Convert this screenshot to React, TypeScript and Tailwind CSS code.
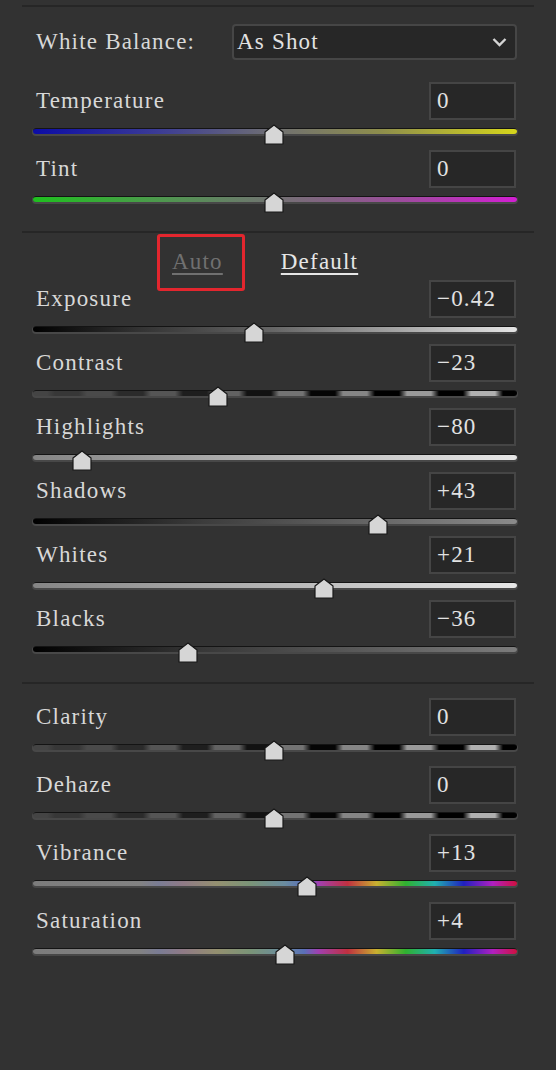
import type { CSSProperties } from "react";

type Row = {
  label: string;
  value: string;
  pos: number; // x of the thumb apex in the panel
  track?: string;
  bands?: boolean;
};

const TRACK_LEFT = 32;
const TRACK_WIDTH = 484;

// contrast / clarity / dehaze tracks: alternating bands that get harder to the right
function bandGradient() {
  const grey = (x: number, light: boolean) => {
    const t = Math.min(Math.max(x / TRACK_WIDTH, 0), 1);
    const v = light ? 68 + 120 * Math.pow(t, 1.5) : Math.max(0, 62 - 95 * t);
    const c = Math.round(v);
    return `rgb(${c},${c},${c})`;
  };
  const stops: string[] = [];
  for (let k = 0; k < 8; k++) {
    const s = -14 + 64 * k;
    const hi = grey(s + 16, true);
    const lo = grey(s + 48, false);
    stops.push(`${hi} ${s + 4}px`, `${hi} ${s + 28}px`, `${lo} ${s + 36}px`, `${lo} ${s + 60}px`);
  }
  return `linear-gradient(to right, ${stops.join(", ")})`;
}

const BANDS = bandGradient();

const whiteBalance: Row[] = [
  {
    label: "Temperature",
    value: "0",
    pos: 274,
    track: "bg-[linear-gradient(to_right,#0c0ca6_0%,#3a3a96_25%,#707072_50%,#8e8e4c_72%,#d6d61c_100%)]",
  },
  {
    label: "Tint",
    value: "0",
    pos: 274,
    track: "bg-[linear-gradient(to_right,#1fc01f_0%,#4c9a4c_25%,#727272_50%,#9a4e9a_75%,#d21fd2_100%)]",
  },
];

const basic: Row[] = [
  {
    label: "Exposure",
    value: "−0.42",
    pos: 254,
    track: "bg-[linear-gradient(to_right,#000000_0%,#333333_22%,#676767_50%,#a6a6a6_76%,#e4e4e4_100%)]",
  },
  { label: "Contrast", value: "−23", pos: 218, bands: true },
  {
    label: "Highlights",
    value: "−80",
    pos: 82,
    track: "bg-[linear-gradient(to_right,#858585,#e6e6e6)]",
  },
  {
    label: "Shadows",
    value: "+43",
    pos: 378,
    track: "bg-[linear-gradient(to_right,#000000_0%,#3c3c3c_35%,#8a8a8a_100%)]",
  },
  {
    label: "Whites",
    value: "+21",
    pos: 324,
    track: "bg-[linear-gradient(to_right,#858585,#e6e6e6)]",
  },
  {
    label: "Blacks",
    value: "−36",
    pos: 188,
    track: "bg-[linear-gradient(to_right,#000000_0%,#383838_35%,#7c7c7c_100%)]",
  },
];

const SPECTRUM =
  "bg-[linear-gradient(to_right,#7c7c7c_0%,#828282_22%,#7a7c94_26%,#8f7a86_31%,#949070_38%,#7a9478_45%,#6a8ca0_52%,#5a70b8_56%,#a040b0_59%,#c03040_65%,#c8b030_71%,#30b030_77%,#20b0b0_83%,#2020c0_89%,#b020c0_95%,#d01040_100%)]";

const presence: Row[] = [
  { label: "Clarity", value: "0", pos: 274, bands: true },
  { label: "Dehaze", value: "0", pos: 274, bands: true },
  { label: "Vibrance", value: "+13", pos: 307, track: SPECTRUM },
  { label: "Saturation", value: "+4", pos: 285, track: SPECTRUM },
];

function Divider({ className = "" }: { className?: string }) {
  return <div className={`mx-[22px] h-[2px] bg-[#262626] ${className}`} />;
}

function ValueBox({ value }: { value: string }) {
  return (
    <div className="mr-[2px] flex h-[38px] w-[87px] items-center border-2 border-[#454545] bg-[#272727] pl-[6px] text-[#e2e2e2]">
      {value}
    </div>
  );
}

function Slider({ row }: { row: Row }) {
  const fill: CSSProperties | undefined = row.bands ? { backgroundImage: BANDS } : undefined;
  return (
    <div className="relative h-[8px]">
      <div className="h-[8px] rounded-full bg-[#484848] px-[1px] pb-[2px]">
        <div className={`h-[6px] rounded-full border-t border-[#141414] ${row.track ?? ""}`} style={fill} />
      </div>
      <svg
        className="absolute top-[-4px]"
        style={{ left: row.pos - TRACK_LEFT - 10 }}
        width="20"
        height="21"
        viewBox="0 0 20 21"
      >
        <path
          d="M1 8 L10 1 L19 8 V20 H1 Z"
          fill="#d6d6d6"
          stroke="#181818"
          strokeWidth="1.2"
          strokeLinejoin="round"
        />
      </svg>
    </div>
  );
}

function SliderRow({ row, tight }: { row: Row; tight?: boolean }) {
  return (
    <div className={tight ? "pb-[10px]" : "pb-[14px]"}>
      <div className="flex h-[38px] items-center justify-between">
        <span className="pl-[4px]">{row.label}</span>
        <ValueBox value={row.value} />
      </div>
      <div className="mt-[8px]">
        <Slider row={row} />
      </div>
    </div>
  );
}

export default function App() {
  return (
    <div className="h-[1070px] w-[556px] overflow-hidden bg-[#323232] pt-[5px] font-['Liberation_Serif',serif] text-[23px] leading-[26px] tracking-[1.2px] text-[#d8d8d8]">
      <Divider />

      {/* White balance */}
      <div className="ml-[32px] w-[486px]">
        <div className="mt-[17px] flex h-[36px] items-center justify-between">
          <span className="pl-[4px]">White Balance:</span>
          <div className="mr-[1px] flex h-[36px] w-[285px] items-center justify-between rounded-[4px] border-2 border-[#464646] bg-[#272727] pl-[3px] pr-[8px] text-[#e2e2e2]">
            <span>As Shot</span>
            <svg width="15" height="10" viewBox="0 0 15 10">
              <polyline
                points="1.5,2 7.5,8 13.5,2"
                fill="none"
                stroke="#d4d4d4"
                strokeWidth="2.4"
              />
            </svg>
          </div>
        </div>
        <div className="mt-[22px]">
          {whiteBalance.map((row) => (
            <SliderRow key={row.label} row={row} />
          ))}
        </div>
      </div>

      <Divider className="mt-[13px]" />

      {/* Tone */}
      <div className="ml-[32px] w-[486px]">
        <div className="flex h-[47px] items-center gap-[58px] pl-[140px] pt-[10px]">
          <span className="relative text-[#707070] underline underline-offset-[4px]">
            Auto
            <span className="absolute -bottom-[16px] -left-[15px] -right-[22px] -top-[15px] rounded-[3px] border-[3px] border-[#e3262e]" />
          </span>
          <span className="text-[#e6e6e6] underline underline-offset-[4px]">Default</span>
        </div>
        {basic.map((row) => (
          <SliderRow key={row.label} row={row} tight />
        ))}
      </div>

      <Divider className="mt-[18px]" />

      {/* Presence */}
      <div className="ml-[32px] mt-[14px] w-[486px]">
        {presence.map((row) => (
          <SliderRow key={row.label} row={row} />
        ))}
      </div>
    </div>
  );
}
